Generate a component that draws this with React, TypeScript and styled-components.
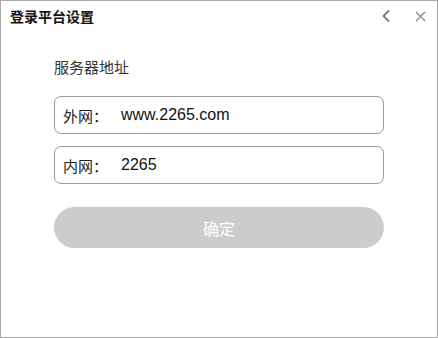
import React from 'react'
import styled, { createGlobalStyle } from 'styled-components'

const Global = createGlobalStyle`
  html, body {
    margin: 0;
    padding: 0;
    background: #fff;
  }
  body {
    font-family: "Liberation Sans", Arial, "Noto Sans CJK SC", sans-serif;
  }
`

const Window = styled.div`
  box-sizing: border-box;
  width: 438px;
  height: 338px;
  border: 1px solid #a9a9a9;
  background: #fff;
  display: flex;
  flex-direction: column;
`
const TitleBar = styled.div`
  height: 30px;
  display: flex;
  align-items: center;
  padding: 0 10px 0 9px;
`
const Title = styled.div`
  flex: 1;
  font-weight: bold;
  font-size: 14px;
  color: #111;
  font-family: "Noto Sans CJK SC", sans-serif;
`
const IconButton = styled.button`
  border: none;
  background: none;
  padding: 0;
  margin-left: ${(p: { $gap?: number }) => p.$gap ?? 0}px;
  width: 14px;
  height: 14px;
  display: flex;
  align-items: center;
  justify-content: center;
  cursor: pointer;
`
const Body = styled.div`
  padding: 25px 53px 0 53px;
  display: flex;
  flex-direction: column;
`
const Heading = styled.div`
  font-size: 15px;
  color: #333;
  font-family: "Noto Sans CJK SC", sans-serif;
  line-height: 22px;
  margin-bottom: 18px;
`
const Field = styled.div`
  box-sizing: border-box;
  height: 38px;
  border: 1px solid #999;
  border-radius: 7px;
  display: flex;
  align-items: center;
  padding-left: 8px;
  margin-bottom: 12px;
`
const FieldLabel = styled.span`
  font-size: 15px;
  color: #222;
  width: 58px;
  font-family: "Noto Sans CJK SC", sans-serif;
`
const FieldValue = styled.span`
  font-size: 16px;
  color: #111;
  font-family: "Liberation Sans", Arial, sans-serif;
`
const Submit = styled.button`
  margin-top: 11px;
  height: 41px;
  border: none;
  border-radius: 21px;
  background: #cccccc;
  color: #fff;
  font-size: 16px;
  font-family: "Noto Sans CJK SC", sans-serif;
`

const App = () => {
  return (
    <>
      <Global />
      <Window>
        <TitleBar>
          <Title>登录平台设置</Title>
          <IconButton>
            <svg width="10" height="14" viewBox="0 0 10 14">
              <path d="M8 1.5 L2.5 7 L8 12.5" fill="none" stroke="#777" strokeWidth="1.8" />
            </svg>
          </IconButton>
          <IconButton $gap={20}>
            <svg width="11" height="11" viewBox="0 0 11 11">
              <path d="M1 1 L10 10 M10 1 L1 10" fill="none" stroke="#888" strokeWidth="1.3" />
            </svg>
          </IconButton>
        </TitleBar>
        <Body>
          <Heading>服务器地址</Heading>
          <Field>
            <FieldLabel>外网：</FieldLabel>
            <FieldValue>www.2265.com</FieldValue>
          </Field>
          <Field>
            <FieldLabel>内网：</FieldLabel>
            <FieldValue>2265</FieldValue>
          </Field>
          <Submit>确定</Submit>
        </Body>
      </Window>
    </>
  )
}

export default App
